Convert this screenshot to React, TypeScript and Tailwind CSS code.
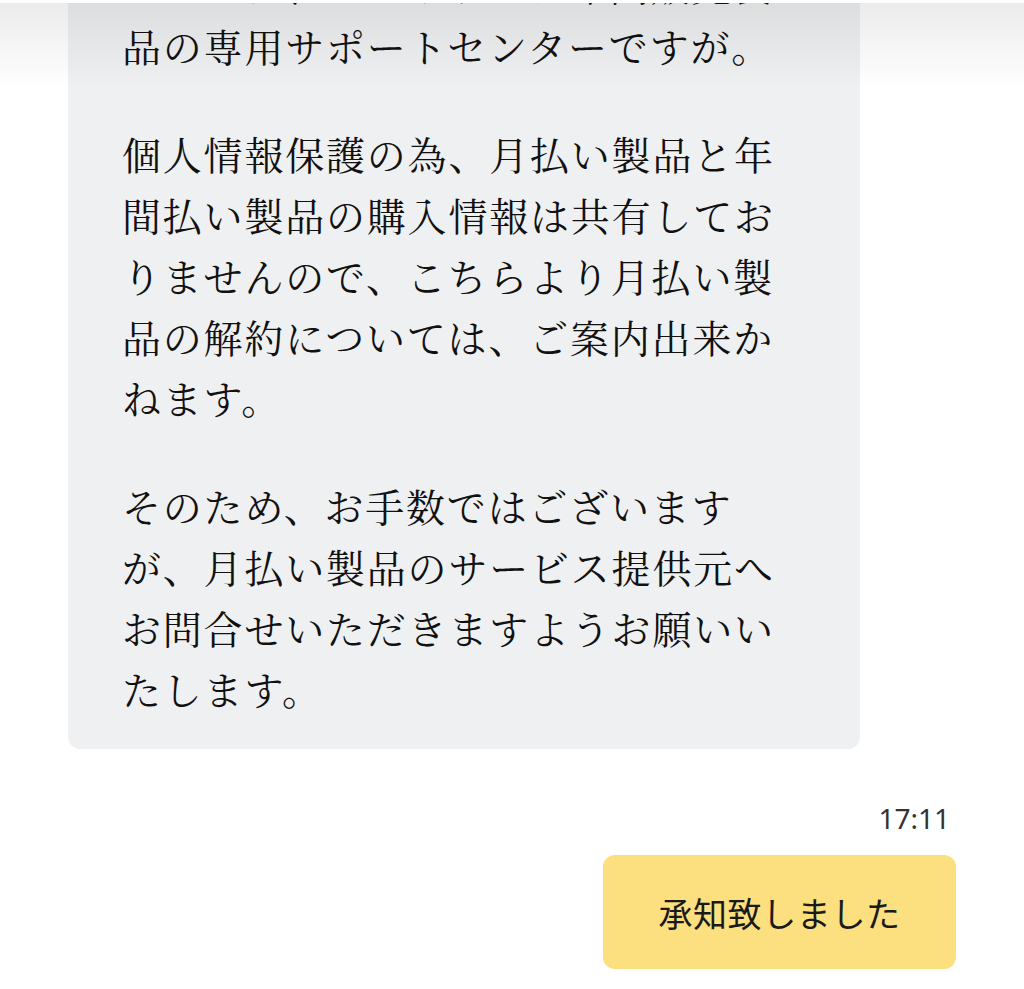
const serif = {
  fontFamily: '"Noto Serif CJK JP", "Noto Serif JP", "Liberation Serif", "Noto Sans CJK JP", serif',
};

const paragraphs = [
  ["こちらは、ソフトウェア年間販売製", "品の専用サポートセンターですが。"],
  ["個人情報保護の為、月払い製品と年間払い製品の購入情報は共有しておりませんので、こちらより月払い製品の解約については、ご案内出来かねます。"],
  ["そのため、お手数ではございますが、月払い製品のサービス提供元へお問合せいただきますようお願いいたします。"],
];

export default function App() {
  return (
    <div className="relative h-[989px] w-[1024px] overflow-hidden bg-white">
      {/* header edge + its shadow, sitting over the scrolled chat */}
      <div className="pointer-events-none absolute inset-x-0 top-0 z-10">
        <div className="h-[3px] bg-white" />
        <div className="h-[85px] bg-gradient-to-b from-[rgba(0,0,0,0.08)] to-transparent" />
      </div>

      <div className="flex flex-col px-[68px]">
        {/* received bubble */}
        <div className="mt-[-100px] w-[792px] rounded-[12px] bg-[#eff0f2] pb-[30px] pl-[54px] pr-[58px] pt-[54px]">
          <div className="flex flex-col gap-[47px] text-[39px] leading-[61px] tracking-[1.8px] text-[#111]" style={serif}>
            {paragraphs.map((p, i) => (
              <div key={i} className="[line-break:strict]">
                {p.map((line, j) => (
                  <div key={j}>{line}</div>
                ))}
              </div>
            ))}
          </div>
        </div>

        {/* sent */}
        <div className="mt-[52px] flex flex-col items-end">
          <span className="mr-[6px] font-['Noto_Sans',sans-serif] text-[28px] leading-[34px] text-[#333]">
            17:11
          </span>
          <div className="mt-[20px] flex h-[114px] w-[353px] items-center justify-center rounded-[12px] bg-[#fcdf7f]">
            <span className="font-['Noto_Sans_CJK_JP',sans-serif] text-[34px] tracking-[0.6px] text-[#1a1a1a]">
              承知致しました
            </span>
          </div>
        </div>
      </div>
    </div>
  );
}
